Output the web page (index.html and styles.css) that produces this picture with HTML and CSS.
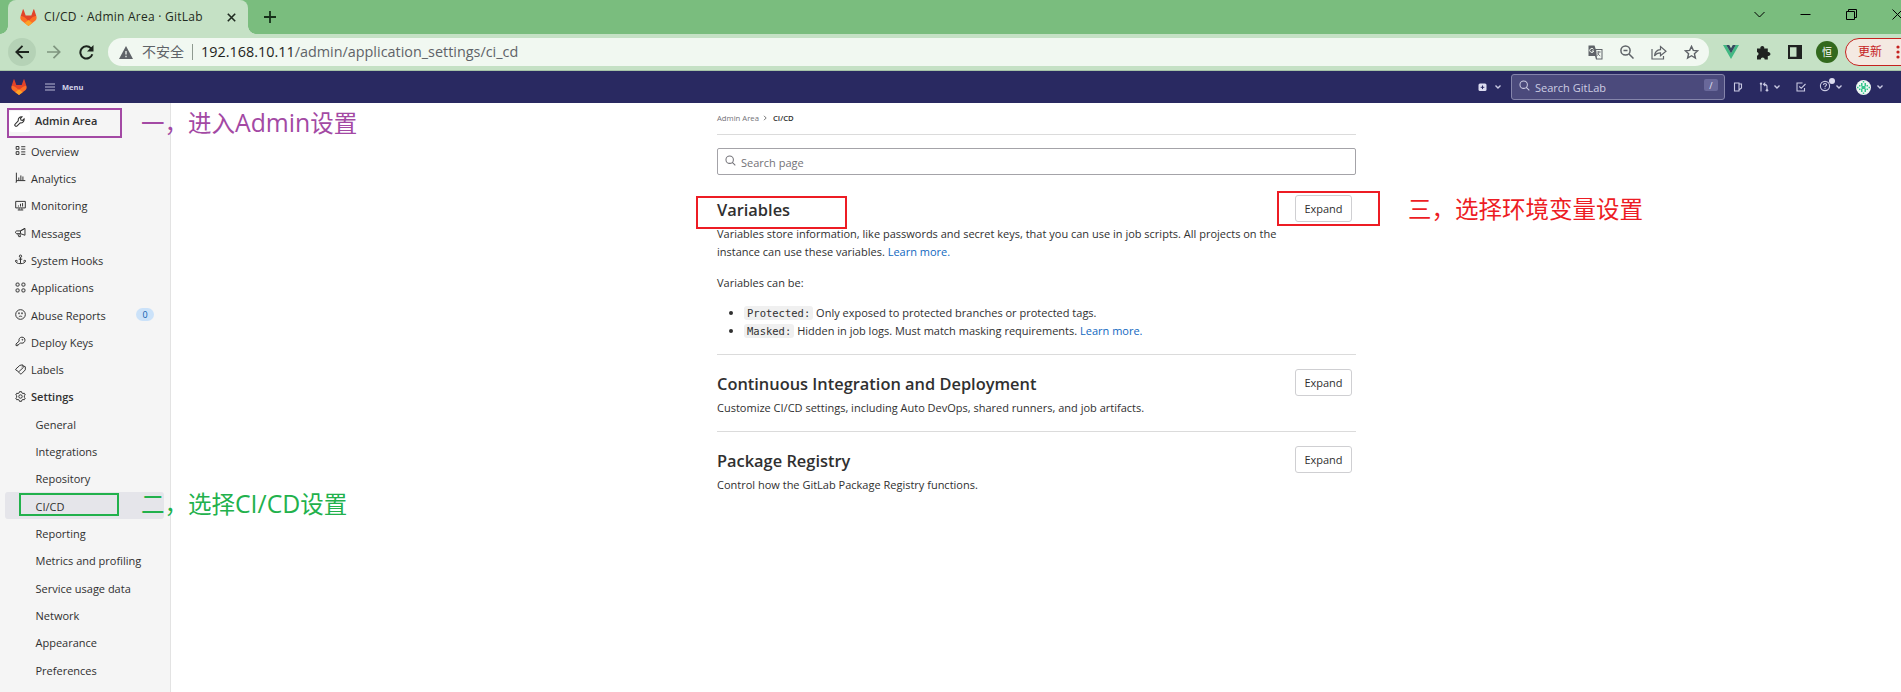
FILE: index.html
```html
<!DOCTYPE html>
<html lang="zh-CN">
<head>
<meta charset="utf-8">
<title>CI/CD · Admin Area · GitLab</title>
<link rel="stylesheet" href="styles.css">
</head>
<body>
<svg class="defs" width="0" height="0">
  <symbol id="tanuki" viewBox="0 0 24 24"><path fill="#e24329" d="M1 10 4 .8c.2-.5.8-.5 1 0L8 9h8l3-8.200c.2-.5.8-.5 1 0L23 10l-11 9z"/><path fill="#fc6d26" d="M1 10c3 .3 5.500 1.500 7.500 3.500L12 17l3.500-3.500c2-2 4.500-3.200 7.500-3.500 1 2.500.5 5-1.500 6.700L12 24l-9.500-7.300C.5 15 0 12.500 1 10z"/><path fill="#fca326" d="m6.500 19.700 5.500-4.200 5.500 4.200L12 24z"/></symbol>
  <symbol id="chev" viewBox="0 0 8 8"><path d="m1.500 2.500 2.500 2.500 2.500-2.500" fill="none" stroke="currentColor" stroke-width="1.400"/></symbol>
  <symbol id="mag" viewBox="0 0 16 16"><path d="M11 11l4 4M12.200 6.800a5.400 5.400 0 1 1-10.800 0 5.400 5.400 0 0 1 10.800 0z" fill="none" stroke="currentColor" stroke-width="1.500"/></symbol>
</svg>

<header class="tabs">
  <div class="tab">
    <svg class="fav" width="17" height="17"><use href="#tanuki"/></svg>
    <span class="tab-title t">CI/CD · Admin Area · GitLab</span>
    <svg class="tab-x" width="9" height="9" viewBox="0 0 9 9"><path d="m.8.8 7.400 7.400M8.200.8.8 8.200" stroke="#1f2a20" stroke-width="1.600"/></svg>
  </div>
  <svg class="newtab" width="12" height="12" viewBox="0 0 12 12"><path d="M6 0v12M0 6h12" stroke="#16301a" stroke-width="1.800"/></svg>
  <div class="win">
    <svg width="11" height="11" viewBox="0 0 11 11"><path d="m.5 3 5 5 5-5" fill="none" stroke="#000"/></svg>
    <svg width="11" height="11" viewBox="0 0 11 11"><path d="M.500 5.500h10" stroke="#000"/></svg>
    <svg width="11" height="11" viewBox="0 0 11 11"><path d="M.5 2.500h8v8h-8zM2.500 2.500v-2h8v8h-2" fill="none" stroke="#000"/></svg>
    <svg width="11" height="11" viewBox="0 0 11 11"><path d="m.5.5 10 10m0-10-10 10" stroke="#000"/></svg>
  </div>
</header>

<div class="toolbar">
  <div class="navbtn hover"><svg width="14" height="14" viewBox="0 0 14 14"><path d="M14 7H1.500M7.500.8 1.300 7l6.200 6.200" fill="none" stroke="#1c231d" stroke-width="1.800"/></svg></div>
  <div class="navbtn"><svg width="14" height="14" viewBox="0 0 14 14"><path d="M0 7h12.500M6.500.8 12.700 7l-6.200 6.200" fill="none" stroke="#7f957f" stroke-width="1.700"/></svg></div>
  <div class="navbtn"><svg width="15" height="15" viewBox="0 0 15 15"><path d="M13.300 9.200a6.100 6.100 0 1 1-1.300-5.900l1 1" fill="none" stroke="#1c231d" stroke-width="2"/><path d="M14.500 0v6.500H8z" fill="#1c231d"/></svg></div>
  <div class="omni">
    <svg width="14" height="13" viewBox="0 0 14 13"><path d="M7 0l7 13H0z" fill="#5f6368"/><path d="M7 5v3.500M7 9.700v1.500" stroke="#f1f8f1" stroke-width="1.300"/></svg>
    <span class="insecure t">不安全</span><i class="bar"></i>
    <span class="url t"><b>192.168.10.11</b>/admin/application_settings/ci_cd</span>
    <div class="omni-icons">
      <svg width="15" height="15" viewBox="0 0 15 15"><path d="M.5.5h6L7.700 4H14.500v10.500H8L7 11H.5z" fill="#5f6368"/><path d="M8.200 5h5.300v8.500H9z" fill="#f1f8f1"/><path d="M8.800 7h4M10.800 6v1c0 2-.8 3-2 4M9.600 8c.6 1.500 1.500 2.400 2.700 3" fill="none" stroke="#5f6368" stroke-width=".8"/><path d="M5.500 4.400A2 2 0 1 0 5.700 6H4" fill="none" stroke="#f1f8f1"/></svg>
      <svg width="14" height="14" viewBox="0 0 14 14"><circle cx="5.500" cy="5.500" r="4.600" fill="none" stroke="#5f6368" stroke-width="1.500"/><path d="m9 9 4.500 4.500M3.500 5.500h4" stroke="#5f6368" stroke-width="1.500"/></svg>
      <svg width="16" height="15" viewBox="0 0 16 15"><path d="M1 4v10h11.500v-3M3.500 11c.3-4 2.300-6 6-6.300V1.500L15 6.300l-5.500 4.400V7.800c-2.800 0-4.600 1-6 3.200z" fill="none" stroke="#5f6368" stroke-width="1.200"/></svg>
      <svg width="15" height="15" viewBox="0 0 15 15"><path d="m7.500 1.400 1.800 4 4.400.4-3.300 2.900 1 4.300-3.900-2.300L3.600 13l1-4.300L1.300 5.800l4.400-.4z" fill="none" stroke="#5f6368" stroke-width="1.400"/></svg>
    </div>
  </div>
  <div class="ext">
    <svg width="16" height="14" viewBox="0 0 16 14"><path d="M0 0h3.200L8 8.300 12.800 0H16L8 14z" fill="#41b883"/><path d="M3.200 0h3L8 3.200 9.800 0h3L8 8.300z" fill="#35495e"/></svg>
    <svg width="15" height="15" viewBox="0 0 15 15"><path d="M1 3.500h3.400a2 2 0 1 1 3.800 0h3.600v3.600a2 2 0 1 1 0 3.800V14.500H8.700a2 2 0 0 0-4 0H1v-3.700a2 2 0 0 0 0-3.900z" fill="#1f2220"/></svg>
    <svg width="14" height="14" viewBox="0 0 14 14"><path d="M0 0h14v14H0zM2 2.200v9.600h6.500V2.200z" fill="#1f2220" fill-rule="evenodd"/></svg>
    <span class="me">恒</span>
    <span class="update"><span class="t">更新</span><svg width="4" height="14" viewBox="0 0 4 14"><g fill="#c5221f"><circle cx="2" cy="2" r="1.600"/><circle cx="2" cy="7" r="1.600"/><circle cx="2" cy="12" r="1.600"/></g></svg></span>
  </div>
</div>

<nav class="gl">
  <svg class="gl-logo" width="16" height="16"><use href="#tanuki"/></svg>
  <svg class="burger" width="10" height="8" viewBox="0 0 10 8"><path d="M0 1h10M0 4h10M0 7h10" stroke="#b9b9d6" stroke-width="1.200"/></svg>
  <span class="menu t">Menu</span>
  <div class="gl-right">
    <svg class="i-plus" width="9" height="9" viewBox="0 0 9 9"><rect x=".5" y=".5" width="8" height="7.500" rx="1.500" fill="#dcdcf0"/><path d="M4.500 2.500v3.600M2.700 4.300h3.600" stroke="#292961"/></svg>
    <svg class="i-c1" width="8" height="8"><use href="#chev"/></svg>
    <div class="gl-search">
      <svg width="11" height="11"><use href="#mag"/></svg><span class="t">Search GitLab</span><kbd>/</kbd>
    </div>
    <svg class="i-iss" width="10" height="10" viewBox="0 0 10 10"><path d="M1.500 1H6v8H1.500zM6 2h2.500v4L6 8" fill="none" stroke="currentColor" stroke-width="1.100"/></svg>
    <svg class="i-mr" width="10" height="10" viewBox="0 0 10 10"><path d="M2 3v6.500M8 7V4.500C8 3 7.300 2.300 5 2.300M6.300.6 4.500 2.300l1.800 1.700" fill="none" stroke="currentColor" stroke-width="1.100"/><circle cx="2" cy="1.800" r="1.200" fill="currentColor"/><circle cx="8" cy="8.200" r="1.300" fill="currentColor"/></svg>
    <svg class="i-c2" width="8" height="8"><use href="#chev"/></svg>
    <svg class="i-todo" width="10" height="10" viewBox="0 0 10 10"><path d="M6.500 1H1v8h7.500V6M3.300 4.500 5.200 6.300 9.500 2" fill="none" stroke="currentColor" stroke-width="1.100"/></svg>
    <svg class="i-help" width="20" height="16" viewBox="0 0 20 16"><circle cx="6" cy="9" r="4.600" fill="none" stroke="currentColor" stroke-width="1.100"/><path d="M4.500 8c0-2 3-1.900 3-.2C7.500 9 6 8.800 6 10M6 10.800v1" fill="none" stroke="currentColor" stroke-width="1.100"/><circle cx="13" cy="4" r="3" fill="#dcdcf0"/></svg>
    <svg class="i-c3" width="8" height="8"><use href="#chev"/></svg>
    <svg class="i-av" width="15" height="15" viewBox="0 0 15 15"><circle cx="7.500" cy="7.500" r="7.500" fill="#eef7f2"/><path d="M5 3h1.500v3H5zM8.500 3H10v3H8.500zM3 5h1.500v1.500H3zM10.500 5H12v1.500h-1.500zM5.500 6h4v3h-4zM3 8.500h1.500V10H3zM10.500 8.500H12V10h-1.500zM5 9h1.500v3H5zM8.500 9H10v3H8.500zM1 6.800h1.500v1.500H1zM12.500 6.800H14v1.500h-1.500zM6.800 1h1.400v1.500H6.800zM6.800 12.500h1.400V14H6.800z" fill="#35c78d"/></svg>
    <svg class="i-c4" width="8" height="8"><use href="#chev"/></svg>
  </div>
</nav>

<div class="page">
  <aside class="side">
    <div class="ctx"><span class="ctx-i"><svg width="11" height="11" viewBox="0 0 16 16"><path d="M9 10 4.600 14.400a1.900 1.900 0 0 1-2.900-2.700L6.200 7.200A5 5 0 0 1 11.600 1.200L9.500 3.600l.6 2.300 2.300.5 2.300-2.200A5 5 0 0 1 9 10z" fill="none" stroke="#303030" stroke-width="1.500"/></svg></span><span class="t">Admin Area</span></div>
    <ul class="top">
      <li><svg viewBox="0 0 16 16"><path d="M1.700 2.200h4v4h-4zM1.700 9.700h4v4h-4zM9 2.500h6M9 6h6M9 10h6M9 13.500h6" /></svg><span class="t">Overview</span></li>
      <li><svg viewBox="0 0 16 16"><path d="M2 1v11.500h13M5.500 12V8M8.500 12V5M11.500 12V6.500M1 15h1v-3"/></svg><span class="t">Analytics</span></li>
      <li><svg viewBox="0 0 16 16"><path d="M1 2h14v9.500H1zM5 9.500V8M8 9.500V5.500M11 9.500V4.500M4 14.500h8M6 12v2M10 12v2"/></svg><span class="t">Monitoring</span></li>
      <li><svg viewBox="0 0 16 16"><path d="M14.500 2v10L8 9.700H3a2 2 0 0 1-2-3c.4-.7 1-1 2-1h5zM8 5.500v4M4 10l1.500 4H8l-1-4M14.500 2 8 5.500"/></svg><span class="t">Messages</span></li>
      <li><svg viewBox="0 0 16 16"><circle cx="8" cy="3.200" r="1.700"/><path d="M8 5v9M5.500 7.500h5M1 9v1c0 3 3 4 7 4s7-1 7-4V9M.500 11 2 9l2 1.500M15.500 11 14 9l-2 1.500"/></svg><span class="t">System Hooks</span></li>
      <li><svg viewBox="0 0 16 16"><rect x="1.500" y="1.500" width="4.500" height="4.500" rx="1.500"/><rect x="10" y="1.500" width="4.500" height="4.500" rx="1.500"/><rect x="1.500" y="10" width="4.500" height="4.500" rx="1.500"/><rect x="10" y="10" width="4.500" height="4.500" rx="1.500"/></svg><span class="t">Applications</span></li>
      <li><svg viewBox="0 0 16 16"><circle cx="8" cy="8" r="7"/><path d="m4.800 5.500 2 1.500m-2 0 2-1.500M9.200 5.500l2 1.500m-2 0 2-1.500M5.500 11.500c1.300-1.500 3.700-1.500 5 0"/></svg><span class="t">Abuse Reports</span><em>0</em></li>
      <li><svg viewBox="0 0 16 16"><path d="M10 1.700c3 0 4.500 2 4.500 4.300 0 2.500-2 4.500-4.500 4.500-.8 0-1.500-.2-2-.5L5.500 12.500H4V14H1.500v-2.500L6 7.500c-1-3 1-5.800 4-5.800z"/><circle cx="10.700" cy="5.500" r=".6"/></svg><span class="t">Deploy Keys</span></li>
      <li><svg viewBox="0 0 16 16"><path d="M1 7.500 7 2l4-.8 1 4-6 5.600a1 1 0 0 1-1.400 0L1 8.500zM11.500 2.500 15 4v4.500l-5.500 5.700a1.500 1.500 0 0 1-2 0L5 11.500M9 4.500h.5"/></svg><span class="t">Labels</span></li>
      <li class="on"><svg viewBox="0 0 16 16"><path d="M6.500 1h3l.5 1.800 1.500.9 1.900-.5 1.500 2.600L13.500 7v2l1.400 1.300-1.500 2.500-1.900-.5-1.500.9-.5 1.800h-3L6 13.200l-1.500-.9-1.900.5-1.500-2.500L2.500 9V7L1.100 5.800l1.500-2.600 1.900.5L6 2.800z"/><circle cx="8" cy="8" r="2.500"/></svg><span class="t">Settings</span></li>
    </ul>
    <ul class="sub">
      <li><span class="t">General</span></li><li><span class="t">Integrations</span></li><li><span class="t">Repository</span></li><li class="active"><span class="t">CI/CD</span></li><li><span class="t">Reporting</span></li><li><span class="t">Metrics and profiling</span></li><li><span class="t">Service usage data</span></li><li><span class="t">Network</span></li><li><span class="t">Appearance</span></li><li><span class="t">Preferences</span></li>
    </ul>
  </aside>
  <main>
    <div class="crumbs"><span class="t">Admin Area</span><svg width="5" height="6" viewBox="0 0 5 6"><path d="m1 .8 2.200 2.200L1 5.200" fill="none" stroke="#777"/></svg><b class="t">CI/CD</b></div>
    <div class="find"><svg width="11" height="11"><use href="#mag"/></svg><span class="t">Search page</span></div>
    <section class="s1">
      <button>Expand</button>
      <h4><span class="t">Variables</span></h4>
      <p><span class="t">Variables store information, like passwords and secret keys, that you can use in job scripts. All projects on the</span><br><span class="t">instance can use these variables. <a>Learn more.</a></span></p>
      <p class="can"><span class="t">Variables can be:</span></p>
      <ul>
        <li><code class="t">Protected:</code> <span class="t">Only exposed to protected branches or protected tags.</span></li>
        <li><code class="t">Masked:</code> <span class="t">Hidden in job logs. Must match masking requirements. <a>Learn more.</a></span></li>
      </ul>
    </section>
    <section class="s2">
      <button>Expand</button>
      <h4><span class="t">Continuous Integration and Deployment</span></h4>
      <p><span class="t">Customize CI/CD settings, including Auto DevOps, shared runners, and job artifacts.</span></p>
    </section>
    <section class="s3">
      <button>Expand</button>
      <h4><span class="t">Package Registry</span></h4>
      <p><span class="t">Control how the GitLab Package Registry functions.</span></p>
    </section>
  </main>
</div>

<div class="mark m1"></div><div class="mark m2"></div><div class="mark m3"></div><div class="mark m4"></div>
<div class="note n1"><span class="t">一，进入<i>Admin</i>设置</span></div>
<div class="note n2"><span class="t">二，选择<i>CI/CD</i>设置</span></div>
<div class="note n3"><span class="t">三，选择环境变量设置</span></div>
</body>
</html>
```

FILE: styles.css
```css
* { box-sizing: border-box; }
html, body { margin: 0; height: 100%; overflow: hidden; }
body { position: relative; display: flex; flex-direction: column; width: 1901px; height: 692px; background: #fff; color: #303030; font: 11px/18px "Open Sans", "Noto Sans", "Noto Sans CJK SC", sans-serif; }
svg { display: block; flex: none; }
.defs { position: absolute; }
ul { list-style: none; margin: 0; padding: 0; }
.t { white-space: nowrap; }

.tabs { display: flex; flex: none; height: 34px; background: #7abd7e; }
.tab { position: relative; display: flex; align-items: center; width: 240px; height: 34px; margin-left: 8px; padding: 0 12px; background: #c5e1c5; border-radius: 8px 8px 0 0; }
.tab::before, .tab::after { content: ""; position: absolute; bottom: 0; width: 8px; height: 8px; }
.tab::before { left: -8px; background: radial-gradient(circle at 0 0, #7abd7e 7.500px, #c5e1c5 8px); }
.tab::after { right: -8px; background: radial-gradient(circle at 100% 0, #7abd7e 7.500px, #c5e1c5 8px); }
.tab-title { flex: 1; margin-left: 7px; color: #1f2a20; font-size: 12px; letter-spacing: .25px; }
.newtab { margin: 11px 0 0 16px; }
.win { display: flex; gap: 35px; margin: 9px -2px 0 auto; }

.toolbar { display: flex; align-items: center; flex: none; height: 37px; overflow: hidden; background: #c5e1c5; border-bottom: 1px solid #a6c3a8; }
.navbtn { display: flex; align-items: center; justify-content: center; flex: none; width: 28px; height: 28px; margin-right: 4px; border-radius: 50%; }
.navbtn.hover { margin-left: 8px; background: #b5d2b6; }
.omni { display: flex; align-items: center; flex: none; width: 1601px; height: 28px; margin-left: 4px; padding-left: 11px; border-radius: 14px; background: #f1f8f1; color: #5f6368; }
.insecure { margin-left: 9px; font-size: 14px; }
.bar { width: 1px; height: 16px; margin: 0 8px; background: #8f9a90; }
.url { font-size: 14.400px; }
.url b { font-weight: 400; color: #1f2421; }
.omni-icons { display: flex; gap: 17px; margin: 0 10px 0 auto; }
.ext { display: flex; align-items: center; flex: none; margin-left: 14px; }
.ext > svg { margin-right: 17px; }
.me { display: flex; align-items: center; justify-content: center; width: 22px; height: 22px; margin-right: 7px; margin-left: -3px; border-radius: 50%; background: #33691e; color: #fff; font-size: 10px; }
.update { display: flex; align-items: center; flex: none; width: 70px; height: 28px; padding-left: 12px; border: 1px solid #c5221f; border-radius: 14px; background: #f4e9e2; color: #c5221f; font-size: 12px; }
.update svg { margin-left: 14px; }

.gl { display: flex; align-items: center; flex: none; height: 32px; background: #292961; color: #c9c9e2; }
.gl-logo { margin-left: 11px; }
.burger { margin-left: 18px; }
.menu { margin-left: 7px; font-size: 7.500px; font-weight: 700; color: #d6d6ea; }
.gl-right { display: flex; align-items: center; margin-left: auto; width: 423px; height: 32px; }
.gl-search { display: flex; align-items: center; width: 214px; height: 26px; margin-left: 9px; padding: 0 7px; border: 1px solid #8585ab; border-radius: 3px; background: #4b4a7c; color: #cdcde3; }
.gl-search svg { margin-top: -3px; }
.gl-search span { margin: 1px 0 0 5px; }
.gl-search kbd { display: flex; align-items: center; justify-content: center; width: 14px; height: 12px; margin: -4px -1px 0 auto; border-radius: 2px; background: #69689a; font: 9px "Open Sans", sans-serif; color: #e6e6f4; }
.i-c1 { margin-left: 7px; }
.i-iss { margin-left: 8px; }
.i-mr { margin-left: 16px; }
.i-c2 { margin-left: 4px; }
.i-todo { margin-left: 15px; }
.i-help { margin: -4px 0 0 13px; }
.i-c3 { margin-left: -4px; }
.i-av { margin-left: 13px; }
.i-c4 { margin-left: 5px; }

.page { display: flex; flex: 1; min-height: 0; }
.side { width: 171px; flex: none; padding-top: 5px; background: #f5f5f5; border-right: 1px solid #e3e3e3; }
.ctx { display: flex; align-items: center; height: 29px; padding-left: 9px; font-weight: 600; font-size: 11px; }
.ctx-i { display: flex; align-items: center; justify-content: center; width: 21px; height: 21px; margin: -3px 5px 0 0; background: #fff; border-radius: 3px; }
.ctx .t { margin-top: -3px; }
.side li { display: flex; align-items: center; height: 27.320px; }
.side li .t { position: relative; top: 1px; }
.side li svg { width: 11px; height: 11px; margin: 0 5px 0 15px; fill: none; stroke: #303030; stroke-width: 1.400; }
.side .on { font-weight: 600; }
.side em { width: 18px; height: 13px; margin: 0 16px 0 auto; border-radius: 7px; background: #cbe2f9; color: #0b5cad; font: 9px/13px "Open Sans", sans-serif; text-align: center; }
.sub li { margin: 0 6px 0 5px; padding-left: 30.500px; border-radius: 3px; }
.sub .active { background: #e5e5ea; }

main { width: 639px; margin-left: 546px; }
.crumbs { display: flex; align-items: center; height: 32px; border-bottom: 1px solid #dbdbdb; font-size: 7.700px; color: #737278; }
.crumbs .t { margin-top: -2px; }
.crumbs svg { margin: -1px 5px 0 4px; }
.crumbs b { font-weight: 600; color: #303030; }
.find { display: flex; align-items: center; height: 27px; margin-top: 13px; padding-left: 7px; border: 1px solid #a4a3a8; border-radius: 2px; color: #737278; }
.find svg { margin: -3px 5px 0 0; }
.find .t { margin-top: 2px; }
section { padding-top: 14px; border-bottom: 1px solid #dbdbdb; }
section button { float: right; width: 57px; height: 27px; margin-right: 4px; padding: 0; border: 1px solid #cfcfd2; border-radius: 3px; background: #fff; color: #303030; font: 11px "Open Sans", sans-serif; }
h4 { margin: 0; padding-top: 1px; font-size: 16.400px; line-height: 28px; font-weight: 600; }
p { margin: 0; padding-top: 1px; }
.s1 { height: 180px; padding-top: 20px; }
.s1 .can { padding-top: 13px; }
.s1 ul { padding: 12px 0 0 27px; }
.s1 ul li { position: relative; height: 18px; }
.s1 ul li::before { content: ""; position: absolute; left: -15px; top: 7px; width: 4px; height: 4px; border-radius: 50%; background: #303030; }
.s2 { height: 77px; }
.s3 { border: 0; }
a { color: #1068bf; }
code { padding: 1px 3px; border-radius: 3px; background: #f0f0f0; font: 10.500px "DejaVu Sans Mono", monospace; }

.mark { position: absolute; border: 2px solid #ed1c24; }
.m1 { left: 7px; top: 108px; width: 115px; height: 30px; border-color: #a349a4; }
.m2 { left: 19px; top: 493px; width: 100px; height: 23px; border-color: #22b14c; }
.m3 { left: 696px; top: 196px; width: 151px; height: 33px; }
.m4 { left: 1277px; top: 191px; width: 103px; height: 35px; }
.note { position: absolute; font: 23.500px/30px "Noto Sans CJK SC", sans-serif; }
.note i { font: 24.800px/1 "Open Sans", sans-serif; }
.n1 { left: 141px; top: 107px; color: #a349a4; }
.n2 { left: 141px; top: 488px; color: #22b14c; }
.n3 { left: 1408px; top: 193px; color: #ed1c24; }
```
